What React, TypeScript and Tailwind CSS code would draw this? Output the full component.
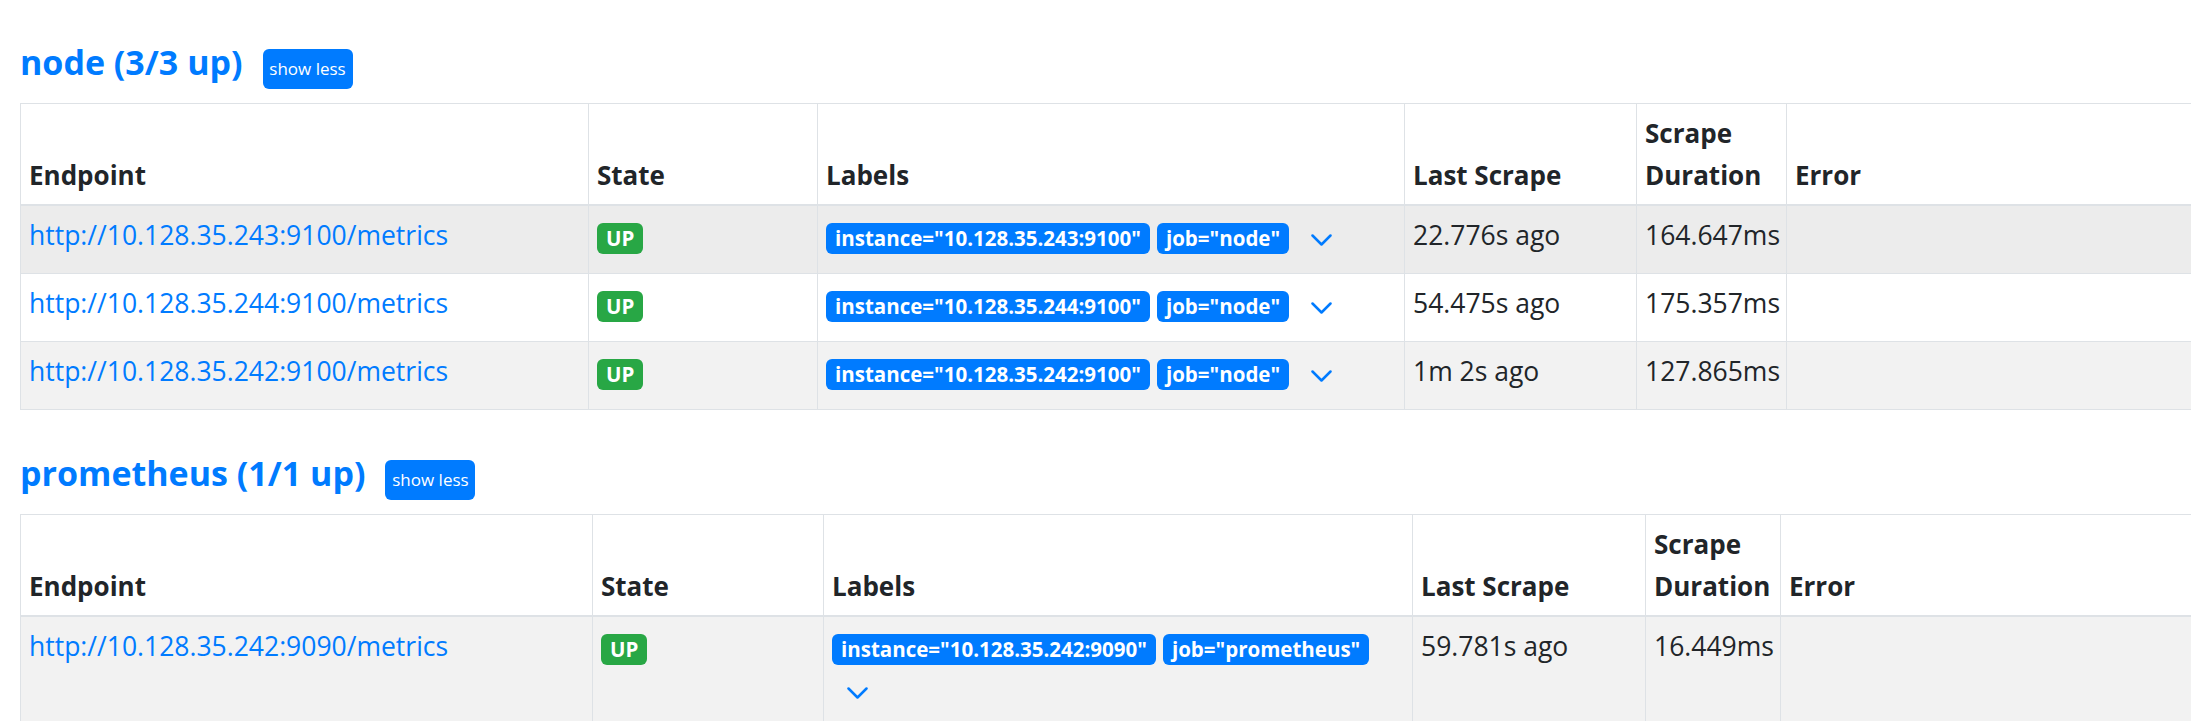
import React from "react";

type Target = {
  endpoint: string;
  labels: [string, string][];
  lastScrape: string;
  duration: string;
  bg: string;
};

type Pool = {
  name: string;
  up: number;
  total: number;
  cols: number[];
  targets: Target[];
};

const pools: Pool[] = [
  {
    name: "node",
    up: 3,
    total: 3,
    cols: [568, 229, 587, 232, 150],
    targets: [
      {
        endpoint: "http://10.128.35.243:9100/metrics",
        labels: [
          ["instance", "10.128.35.243:9100"],
          ["job", "node"],
        ],
        lastScrape: "22.776s ago",
        duration: "164.647ms",
        bg: "bg-[#ececec]",
      },
      {
        endpoint: "http://10.128.35.244:9100/metrics",
        labels: [
          ["instance", "10.128.35.244:9100"],
          ["job", "node"],
        ],
        lastScrape: "54.475s ago",
        duration: "175.357ms",
        bg: "bg-white",
      },
      {
        endpoint: "http://10.128.35.242:9100/metrics",
        labels: [
          ["instance", "10.128.35.242:9100"],
          ["job", "node"],
        ],
        lastScrape: "1m 2s ago",
        duration: "127.865ms",
        bg: "bg-[#f2f2f2]",
      },
    ],
  },
  {
    name: "prometheus",
    up: 1,
    total: 1,
    cols: [572, 231, 589, 233, 135],
    targets: [
      {
        endpoint: "http://10.128.35.242:9090/metrics",
        labels: [
          ["instance", "10.128.35.242:9090"],
          ["job", "prometheus"],
        ],
        lastScrape: "59.781s ago",
        duration: "16.449ms",
        bg: "bg-[#f2f2f2]",
      },
    ],
  },
];

function Chevron() {
  return (
    <svg width="21" height="12" viewBox="0 0 21 12" fill="none">
      <path d="M1.5 1.5 L10.5 10.5 L19.5 1.5" stroke="#007bff" strokeWidth="2.5" strokeLinecap="round" strokeLinejoin="round" />
    </svg>
  );
}

function Badge({ children, color }: { children: React.ReactNode; color: string }) {
  return (
    <span
      className={`mt-[9px] mr-[7px] inline-block h-[31px] rounded-[6px] px-[9px] align-top text-[20.5px] font-bold leading-[31px] whitespace-nowrap text-white ${color}`}
    >
      {children}
    </span>
  );
}

function PoolTable({ pool }: { pool: Pool }) {
  const th = "border border-[#dee2e6] border-b-2 p-[8px] text-left align-bottom text-[26px] font-bold leading-[42px] text-[#212529]";
  const td = "border border-[#dee2e6] p-[8px] align-top text-[26.5px] leading-[42px] text-[#212529]";

  return (
    <section>
      <div className="mb-[14px] flex items-baseline gap-[20px]">
        <h2 className="text-[34px] font-bold leading-[40px] text-[#007bff]">
          {pool.name} ({pool.up}/{pool.total} up)
        </h2>
        <button className="h-[40px] w-[90px] rounded-[6px] bg-[#007bff] text-[17px] leading-[40px] text-white">
          show less
        </button>
      </div>

      <table className="w-[2300px] table-fixed border-collapse">
        <colgroup>
          {pool.cols.map((w, i) => (
            <col key={i} style={{ width: w }} />
          ))}
          <col />
        </colgroup>
        <thead>
          <tr>
            <th className={th}>Endpoint</th>
            <th className={th}>State</th>
            <th className={th}>Labels</th>
            <th className={th}>Last Scrape</th>
            <th className={th}>Scrape Duration</th>
            <th className={th}>Error</th>
          </tr>
        </thead>
        <tbody>
          {pool.targets.map((t) => (
            <tr key={t.endpoint} className={t.bg}>
              <td className={td}>
                <a className="text-[#007bff]" href="#">
                  {t.endpoint}
                </a>
              </td>
              <td className={td}>
                <Badge color="bg-[#28a745]">UP</Badge>
              </td>
              <td className={td}>
                {t.labels.map(([k, v]) => (
                  <Badge key={k} color="bg-[#007bff]">
                    {k}="{v}"
                  </Badge>
                ))}
                <button className="inline-flex h-[51px] items-center border border-transparent px-[14px] align-top">
                  <Chevron />
                </button>
              </td>
              <td className={td}>{t.lastScrape}</td>
              <td className={td}>{t.duration}</td>
              <td className={td}></td>
            </tr>
          ))}
        </tbody>
      </table>
    </section>
  );
}

export default function App() {
  return (
    <div className="h-[721px] w-full overflow-hidden bg-white font-['Open_Sans',sans-serif]">
      <div className="flex flex-col gap-[43px] px-[20px] pt-[42px]">
        {pools.map((p) => (
          <PoolTable key={p.name} pool={p} />
        ))}
      </div>
    </div>
  );
}
